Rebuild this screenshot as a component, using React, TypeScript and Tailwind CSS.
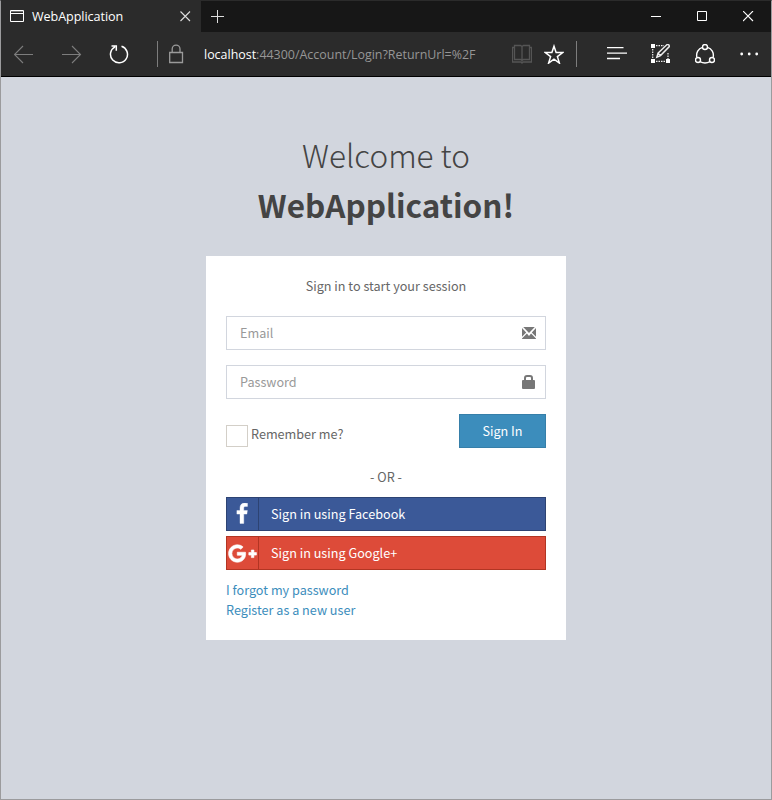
import React from "react";
import { FaGooglePlusG } from "react-icons/fa";

const ui = "font-['Open_Sans','Noto_Sans',sans-serif]";
const page = "font-['Noto_Sans_CJK_SC',sans-serif]";

function TitleBar() {
  return (
    <div className="flex h-[31px] bg-[#171717]">
      <div className="flex w-[200px] items-center bg-[#2b2b2b] pl-[9px]">
        <svg className="mb-px h-[14px] w-[15px] shrink-0" viewBox="0 0 15 14" fill="none" stroke="#fff">
          <path d="M.5 1.500h13v11h-13zM.5 4.500h13" />
          <path d="M1 2.500h12" stroke="#777" />
        </svg>
        <span className={`${ui} ml-[7px] w-[140px] whitespace-nowrap text-[12.600px] leading-[16px] tracking-[-0.07px] text-white`}>WebApplication</span>
        <svg className="ml-[8px] h-[11px] w-[11px] shrink-0" viewBox="0 0 11 11" stroke="#ddd" strokeWidth="1.1">
          <path d="M.5 .5l9.500 9.500M10 .5l-9.500 9.500" />
        </svg>
      </div>
      <div className="flex flex-1 items-center pl-[10px]">
        <svg className="h-[13px] w-[13px]" viewBox="0 0 13 13" stroke="#ddd">
          <path d="M0 6.500h13M6.500 0v13" />
        </svg>
      </div>
      <div className="flex items-center gap-[35px] pr-[17px]">
        <svg className="h-[11px] w-[11px]" viewBox="0 0 11 11" stroke="#fff"><path d="M0 5.500h10" /></svg>
        <svg className="h-[11px] w-[11px]" viewBox="0 0 11 11" stroke="#fff" fill="none"><path d="M.5 .5h9v9h-9z" /></svg>
        <svg className="h-[11px] w-[11px]" viewBox="0 0 11 11" stroke="#fff" strokeWidth="1.1"><path d="M0 0l10 10M10 0l-10 10" /></svg>
      </div>
    </div>
  );
}

function ToolBar() {
  return (
    <div className="flex h-[45px] items-center border-b border-black bg-[#2b2b2b] pl-[13px]">
      <svg className="h-[20px] w-[20px] shrink-0" viewBox="14 44 20 20" fill="none" stroke="#7d7d7d" strokeWidth="1.1">
        <path d="M14.500 54.500H33M23 46l-8.500 8.500L23 63" />
      </svg>
      <svg className="ml-[28px] h-[20px] w-[20px] shrink-0" viewBox="62 44 20 20" fill="none" stroke="#7d7d7d" strokeWidth="1.1">
        <path d="M62 54.500h18.500M72 46l8.500 8.500L72 63" />
      </svg>
      <svg className="ml-[27px] h-[20px] w-[20px] shrink-0" viewBox="109 44 20 20" fill="none" stroke="#fff" strokeWidth="1.5">
        <path d="M121.500 46.200A8.500 8.500 0 1 1 115 46.800M111.500 46h4.800v4.800" />
      </svg>
      <div className="ml-[28px] h-[26px] w-px shrink-0 bg-[#7d7d7d]" />
      <svg className="ml-[11px] h-[20px] w-[15px] shrink-0" viewBox="169 44 15 20" fill="none" stroke="#9a9a9a" strokeWidth="1.3">
        <path d="M169.700 52.500h12.800v10h-12.800zM172.200 52.500v-3.500a3.900 3.900 0 0 1 7.800 0v3.500" />
      </svg>
      <div className={`${ui} ml-[20px] mt-[2px] w-[308px] whitespace-nowrap text-[12.450px] leading-[18px] text-[#969696]`}>
        <span className="text-white">localhost</span>:44300/Account/Login?ReturnUrl=%2F
      </div>
      <svg className="h-[20px] w-[20px] shrink-0" viewBox="512 44 20 20" fill="none" stroke="#555" strokeWidth="1.3">
        <path d="M522 46.500v15M514.500 45.500h6l1.500 1l1.500-1h6v14h-6l-1.500 1l-1.500-1h-6z" />
        <path d="M514.500 47.500h-2v14.500h8.500l1 1l1-1h8.500v-14.500h-2" />
      </svg>
      <svg className="ml-[12px] h-[20px] w-[20px] shrink-0" viewBox="544 44 20 20" fill="none" stroke="#fff" strokeWidth="1.5">
        <path d="M554 46.200l2.100 6.300h6.700l-5.400 4.100l2 6.500l-5.400-4l-5.400 4l2-6.500l-5.400-4.100h6.700z" />
      </svg>
      <div className="ml-[12px] h-[26px] w-px shrink-0 bg-[#7d7d7d]" />
      <svg className="ml-[30px] h-[20px] w-[20px] shrink-0" viewBox="607 44 20 20" stroke="#fff" strokeWidth="1.3">
        <path d="M607 47.700h16.500M607 53.200h20M607 58.500h13" />
      </svg>
      <svg className="ml-[24px] h-[20px] w-[20px] shrink-0" viewBox="651 44 20 20" fill="none" stroke="#eee" strokeWidth="1.2">
        <path d="M656 45.700h8M652.700 49v9M668 53v6M656 61.300h10" strokeDasharray="1.500 1" />
        <path d="M651 44h4v4h-4zM651 59h4v4h-4zM666 59h4v4h-4z" fill="#fff" stroke="none" />
        <path d="M656.800 57.200l1.200-4l9-8.600q2.400-.4 2.300 2l-8.800 9zM658 53.200l2.600 2.400" strokeWidth="1.400" />
      </svg>
      <svg className="ml-[24px] h-[20px] w-[20px] shrink-0" viewBox="695 44 20 20" fill="none" stroke="#fff" strokeWidth="1.4">
        <circle cx="705" cy="47" r="2.500" /><circle cx="698" cy="60" r="2.500" /><circle cx="712" cy="60" r="2.500" />
        <path d="M702.500 47.300a8.300 8.300 0 0 0-5.600 10M707.500 47.300a8.300 8.300 0 0 1 5.600 10M700 61.700q5 2.500 10 0" />
      </svg>
      <svg className="ml-[25px] h-[20px] w-[20px] shrink-0" viewBox="740 43.500 20 20" fill="#fff">
        <circle cx="741.700" cy="53.500" r="1.400" /><circle cx="749.200" cy="53.500" r="1.400" /><circle cx="756.700" cy="53.500" r="1.400" />
      </svg>
    </div>
  );
}

function Field({ label, children }: { label: string; children: React.ReactNode }) {
  return (
    <div className="mb-[15px] flex h-[34px] items-center justify-between border border-[#d2d6de] pl-[13px] pr-[9px] text-[#999]">
      <span>{label}</span>
      {children}
    </div>
  );
}

function LoginCard() {
  return (
    <div className="h-[384px] w-[360px] bg-white px-[20px] pt-[20px] text-[12.650px] leading-[20px] text-[#666]">
      <p className="mb-[20px] text-center">Sign in to start your session</p>
      <Field label="Email">
        <svg className="h-[12px] w-[14px]" viewBox="0 0 14 12" fill="#777">
          <path d="M1.200 0h11.600L7 6zM0 1l4.200 4.600L0 9.800zM14 1v8.800l-4.200-4.200zM0 12v-.6l4.900-4.800L7 8.900l2.100-2.300l4.900 4.800v.6z" />
        </svg>
      </Field>
      <Field label="Password">
        <svg className="mr-px h-[14px] w-[13px]" viewBox="0 0 13 14" fill="#777">
          <path fillRule="evenodd" d="M2 5V3q0-3 3-3h3q3 0 3 3v2h1q1 0 1 1v7q0 1-1 1H1q-1 0-1-1V6q0-1 1-1zM4 5h5V3q0-1-1-1h-3q-1 0-1 1z" />
        </svg>
      </Field>
      <div className="flex justify-between">
        <div className="mt-[11px] flex h-[22px] items-center">
          <span className="mr-[3px] h-[22px] w-[22px] border border-[#d3cfc8]" />
          <span className="mb-[4px]">Remember me?</span>
        </div>
        <button className="h-[34px] w-[87px] border border-[#367fa9] bg-[#3c8dbc] pb-px text-white">Sign In</button>
      </div>
      <p className="mb-[10px] mt-[19px] text-center">- OR -</p>
      <div className="mb-[5px] flex h-[34px] items-center border border-[#2d4373] bg-[#3b5998] text-white">
        <span className="flex h-full w-[32px] items-center justify-center border-r border-[#2d4373] pr-px">
          <svg className="h-[22px] w-[22px]" viewBox="0 0 1792 1792" fill="#fff" stroke="#fff" strokeWidth="30">
            <path d="M1343 12v264h-157q-86 0-116 36t-30 108v189h293l-39 296h-254v759h-306v-759h-255v-296h255v-218q0-186 104-288.500t277-102.500q147 0 228 12z" />
          </svg>
        </span>
        <span className="ml-[12px]">Sign in using Facebook</span>
      </div>
      <div className="mb-[10px] flex h-[34px] items-center border border-[#b23523] bg-[#dd4b39] text-white">
        <span className="flex h-full w-[32px] items-center justify-center border-r border-[#b23523]">
          <FaGooglePlusG className="h-[29px] w-[29px]" stroke="#fff" strokeWidth="14" />
        </span>
        <span className="ml-[12px]">Sign in using Google+</span>
      </div>
      <p className="text-[#3c8dbc]">I forgot my password</p>
      <p className="text-[#3c8dbc]">Register as a new user</p>
    </div>
  );
}

export default function App() {
  return (
    <div className="flex h-[800px] w-[772px] flex-col border border-[#9b9b9d] border-t-[#2b2b2b] bg-[#d2d6de]">
      <TitleBar />
      <ToolBar />
      <div className={`${page} flex flex-1 flex-col items-center pt-[52px]`}>
        <h1 className="mb-[27px] text-center text-[31.500px] leading-[50px] text-[#444]">
          <span className="block font-light">Welcome to</span>
          <b className="block font-bold">WebApplication!</b>
        </h1>
        <LoginCard />
      </div>
    </div>
  );
}
